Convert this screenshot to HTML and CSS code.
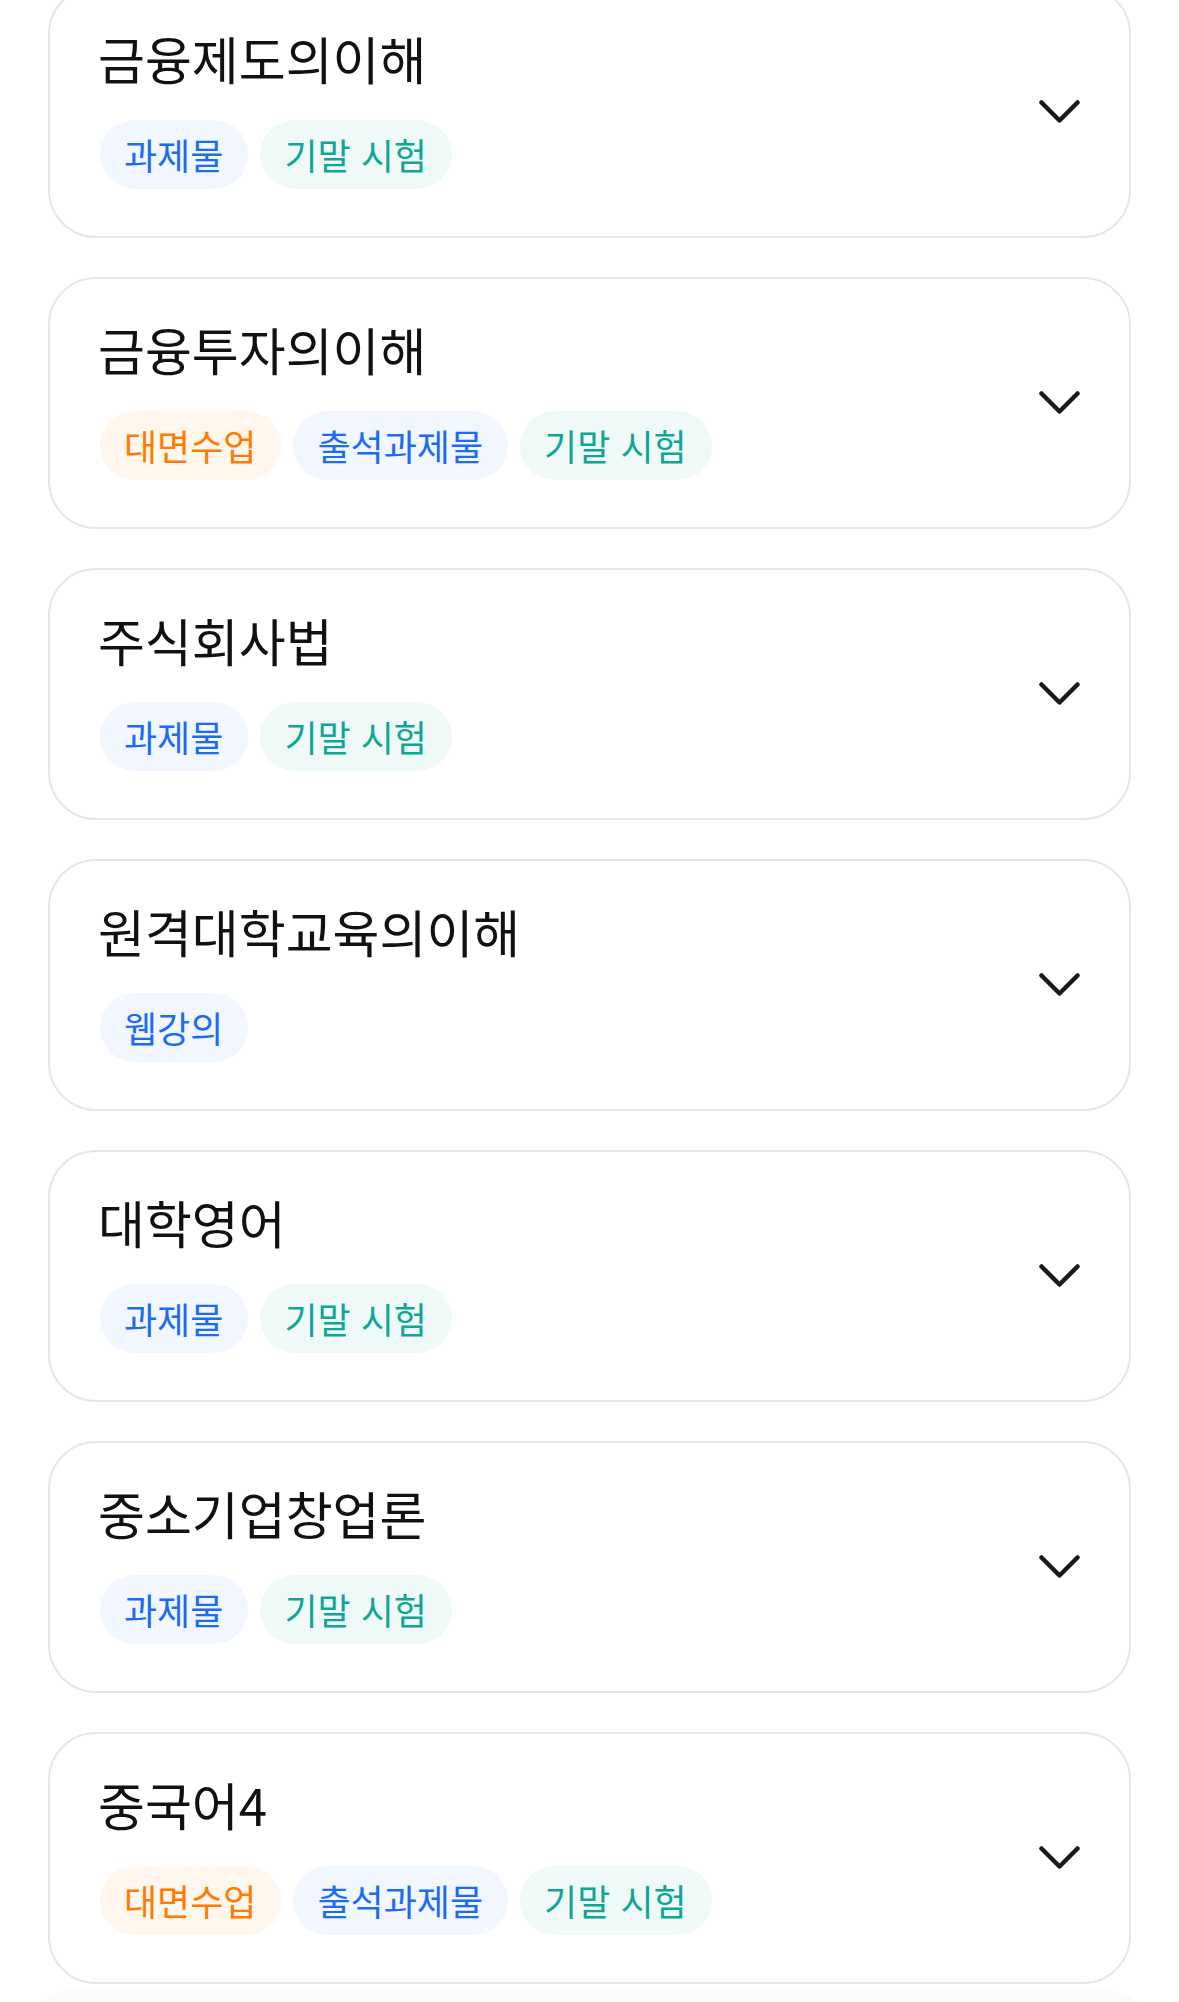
FILE: index.html
```html
<!DOCTYPE html>
<html lang="ko">
<head>
  <meta charset="UTF-8">
  <meta name="viewport" content="width=device-width, initial-scale=1.0">
  <title>수강 과목</title>
  <link rel="stylesheet" href="styles.css">
</head>
<body>
  <div class="course-list">
    <div class="course">
      <div class="course-info">
        <div class="course-name">금융제도의이해</div>
        <div class="tags">
          <span class="tag blue">과제물</span>
          <span class="tag teal">기말 시험</span>
        </div>
      </div>
      <svg class="chevron" viewBox="0 0 41 24"><path d="M2.5 2.5 L20.5 20.5 L38.5 2.5"/></svg>
    </div>

    <div class="course">
      <div class="course-info">
        <div class="course-name">금융투자의이해</div>
        <div class="tags">
          <span class="tag orange">대면수업</span>
          <span class="tag blue">출석과제물</span>
          <span class="tag teal">기말 시험</span>
        </div>
      </div>
      <svg class="chevron" viewBox="0 0 41 24"><path d="M2.5 2.5 L20.5 20.5 L38.5 2.5"/></svg>
    </div>

    <div class="course">
      <div class="course-info">
        <div class="course-name">주식회사법</div>
        <div class="tags">
          <span class="tag blue">과제물</span>
          <span class="tag teal">기말 시험</span>
        </div>
      </div>
      <svg class="chevron" viewBox="0 0 41 24"><path d="M2.5 2.5 L20.5 20.5 L38.5 2.5"/></svg>
    </div>

    <div class="course">
      <div class="course-info">
        <div class="course-name">원격대학교육의이해</div>
        <div class="tags">
          <span class="tag blue">웹강의</span>
        </div>
      </div>
      <svg class="chevron" viewBox="0 0 41 24"><path d="M2.5 2.5 L20.5 20.5 L38.5 2.5"/></svg>
    </div>

    <div class="course">
      <div class="course-info">
        <div class="course-name">대학영어</div>
        <div class="tags">
          <span class="tag blue">과제물</span>
          <span class="tag teal">기말 시험</span>
        </div>
      </div>
      <svg class="chevron" viewBox="0 0 41 24"><path d="M2.5 2.5 L20.5 20.5 L38.5 2.5"/></svg>
    </div>

    <div class="course">
      <div class="course-info">
        <div class="course-name">중소기업창업론</div>
        <div class="tags">
          <span class="tag blue">과제물</span>
          <span class="tag teal">기말 시험</span>
        </div>
      </div>
      <svg class="chevron" viewBox="0 0 41 24"><path d="M2.5 2.5 L20.5 20.5 L38.5 2.5"/></svg>
    </div>

    <div class="course">
      <div class="course-info">
        <div class="course-name">중국어4</div>
        <div class="tags">
          <span class="tag orange">대면수업</span>
          <span class="tag blue">출석과제물</span>
          <span class="tag teal">기말 시험</span>
        </div>
      </div>
      <svg class="chevron" viewBox="0 0 41 24"><path d="M2.5 2.5 L20.5 20.5 L38.5 2.5"/></svg>
    </div>
  </div>
  <div class="bottom-fade"></div>
</body>
</html>
```

FILE: styles.css
```css
* { box-sizing: border-box; }
body {
  margin: 0;
  font-family: "Noto Sans CJK KR", "Noto Sans", sans-serif;
  background: #fff;
  color: #111;
  overflow: hidden;
}
.course-list {
  display: flex;
  flex-direction: column;
  gap: 39px;
  padding: 0 48px;
  margin-top: -14px;
}
.course {
  display: flex;
  align-items: center;
  border: 2px solid #e6e6e6;
  border-radius: 48px;
  padding: 42px 49px 47px 50px;
}
.course-info {
  flex: 1;
  display: flex;
  flex-direction: column;
  gap: 34px;
}
.course-name {
  font-size: 51px;
  line-height: 56px;
  margin-left: -2px;
  color: #111;
}
.tags {
  display: flex;
  gap: 12px;
}
.tag {
  font-size: 36px;
  line-height: 51px;
  padding: 9px 25px 9px 24px;
  border-radius: 35px;
}
.tag.blue {
  color: #1d6cf0;
  background: #f1f6ff;
}
.tag.teal {
  color: #10a696;
  background: #effaf8;
}
.tag.orange {
  color: #ff7b00;
  background: #fff6ee;
}
.chevron {
  width: 41px;
  height: 24px;
  margin-top: 5px;
  fill: none;
  stroke: #1a1a1a;
  stroke-width: 4.5;
  stroke-linecap: round;
  stroke-linejoin: round;
}
.bottom-fade {
  height: 40px;
  margin: 6px 30px 0;
  background: linear-gradient(#fcfcfc, #f9f9f9);
  border-radius: 40px 40px 0 0;
}
```
